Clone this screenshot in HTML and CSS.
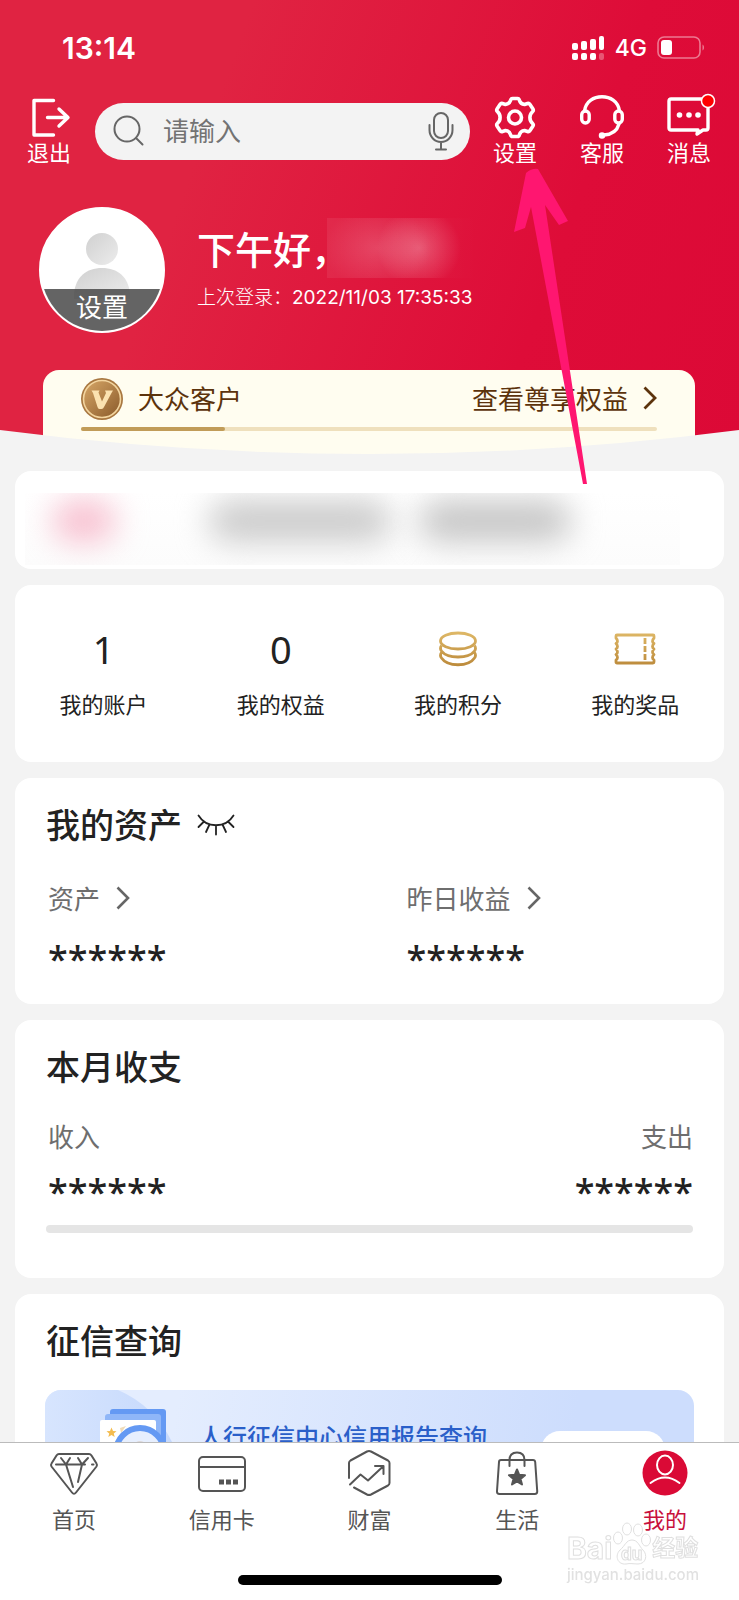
FILE: index.html
```html
<!DOCTYPE html>
<html lang="zh-CN">
<head>
<meta charset="utf-8">
<meta name="viewport" content="width=device-width, initial-scale=1">
<title>我的</title>
<link rel="stylesheet" href="styles.css">
</head>
<body>
<div class="app">
  <main class="scroll">
    <header class="hero">
      <div class="status">
        <span class="status-time">13:14</span>
        <div class="status-right">
          <svg class="signal" viewBox="0 0 33 24" width="33" height="24" fill="#fff">
            <rect x="0" y="7" width="6" height="7" rx="2"/><rect x="9" y="5" width="6" height="9" rx="2"/><rect x="18" y="3" width="6" height="11" rx="2"/><rect x="27" y="0" width="5" height="14" rx="2"/>
            <rect x="0" y="17" width="6" height="7" rx="2"/><rect x="9" y="17" width="6" height="7" rx="2"/><rect x="18" y="17" width="6" height="7" rx="2"/><rect x="27" y="17" width="5" height="7" rx="2" opacity=".3"/>
          </svg>
          <span class="status-net">4G</span>
          <svg viewBox="0 0 48 24" width="48" height="24">
            <rect x="1" y="1" width="42" height="21" rx="6" fill="none" stroke="#fff" stroke-opacity=".45" stroke-width="1.6"/>
            <rect x="4" y="4" width="11" height="15" rx="3" fill="#fff"/>
            <path d="M45.500 8.500c2 1 2 5 0 6z" fill="#fff" opacity=".45"/>
          </svg>
        </div>
      </div>

      <div class="toolbar">
        <button class="tool" type="button">
          <svg viewBox="0 0 44 44" width="44" height="44" fill="none" stroke="#fff" stroke-width="3.4" stroke-linecap="round" stroke-linejoin="round">
            <path d="M26.500 5.500H7v34.500h19.500M20.500 22.500h20M32 14l9 8.500-9 8.500"/>
          </svg>
          <span>退出</span>
        </button>
        <label class="search">
          <svg viewBox="0 0 32 32" width="32" height="32" fill="none" stroke="#666" stroke-width="2" stroke-linecap="round"><circle cx="14" cy="14" r="12.500"/><path d="M23 23l6.500 6.500"/></svg>
          <input class="search-input" type="text" placeholder="请输入" aria-label="搜索">
          <svg viewBox="0 0 26 40" width="26" height="40" fill="none" stroke="#666" stroke-width="2" stroke-linecap="round"><rect x="6" y="2" width="14" height="25" rx="7"/><path d="M1.500 14v5a11.500 12 0 0 0 23 0v-5M13 31v7M8 38.500h10"/></svg>
        </label>
        <button class="tool" type="button">
          <svg viewBox="0 0 44 44" width="44" height="44" fill="none" stroke="#fff" stroke-width="3.600" stroke-linejoin="round">
            <path d="M19.500 3.500h5q1.500 0 2 2 1 3.500 5 4l3-1q1.500-.5 2.500 1l3 4.500q.8 1.500-.5 2.700-2.600 2.300-2.600 5.800t2.600 5.800q1.300 1.200.5 2.700l-3 4.500q-1 1.500-2.500 1l-3-1q-4 .5-5 4-.5 2-2 2h-5q-1.500 0-2-2-1-3.500-5-4l-3 1q-1.500.5-2.500-1l-3-4.500q-.8-1.500.5-2.700 2.600-2.300 2.600-5.800t-2.600-5.800q-1.300-1.200-.5-2.700l3-4.500q1-1.500 2.500-1l3 1q4-.5 5-4 .5-2 2-2z"/>
            <circle cx="22" cy="22.500" r="6.500"/>
          </svg>
          <span>设置</span>
        </button>
        <button class="tool" type="button">
          <svg viewBox="0 0 44 44" width="44" height="44" fill="none" stroke="#fff" stroke-width="3.400" stroke-linecap="round">
            <path d="M4.500 16C6 6 14 1.800 22 1.800S38 6 39.500 16M39 29c-2 7-7 10.500-15 11"/>
            <rect x="1.700" y="16" width="7.500" height="12" rx="3.700"/><rect x="34.800" y="16" width="7.500" height="12" rx="3.700"/>
            <circle cx="22" cy="40.500" r="2.500" fill="#fff" stroke-width="1.500"/>
          </svg>
          <span>客服</span>
        </button>
        <button class="tool" type="button">
          <svg class="overflowing" viewBox="0 0 44 44" width="44" height="44" fill="none" stroke="#fff" stroke-width="3.400" stroke-linejoin="round">
            <path d="M4 4h35q2 0 2 2v27q0 2-2 2h-3l-6 4 1-4H4q-2 0-2-2V6q0-2 2-2z"/>
            <g fill="#fff" stroke="none"><circle cx="12.500" cy="20" r="2.800"/><circle cx="22" cy="20" r="2.800"/><circle cx="31" cy="20" r="2.800"/></g>
            <circle cx="41" cy="6" r="6.500" fill="#f00" stroke-width="1.500"/>
          </svg>
          <span>消息</span>
        </button>
      </div>

      <section class="profile">
        <button class="avatar" type="button">
          <svg class="avatar-figure" viewBox="0 0 56 67" width="56" height="67">
            <defs><linearGradient id="fig" x1="0" y1="0" x2="1" y2="1"><stop offset="0" stop-color="#d0d0d0"/><stop offset="1" stop-color="#ececec"/></linearGradient></defs>
            <circle cx="28" cy="16" r="16" fill="url(#fig)"/>
            <path d="M0 66V60C2 44 12 35 28 35S54 44 56 60v6z" fill="url(#fig)"/>
          </svg>
          <span class="avatar-label">设置</span>
        </button>
        <div class="greeting">
          <h1 class="hello">下午好，<span class="hidden-name"></span></h1>
          <p class="last-login">上次登录：<span class="stamp">2022/11/03 17:35:33</span></p>
        </div>
      </section>

      <section class="member">
        <div class="member-row">
          <svg viewBox="0 0 42 42" width="42" height="42">
            <defs><linearGradient id="coin" x1="0" y1="0" x2="1" y2="1"><stop offset="0" stop-color="#d7a767"/><stop offset="1" stop-color="#8a5a2a"/></linearGradient></defs>
            <circle cx="21" cy="21" r="21" fill="#a87740"/><circle cx="21" cy="21" r="18.500" fill="url(#coin)" stroke="#f3d59f" stroke-width="1.600"/>
            <path d="M10.500 12.500h8l-1 2 3.500 9 4-8.500-1-2.500h8l-1.500 2.500-7.500 14q-.7 2-2.500 2h-2q-1.500 0-2-2L12 15z" fill="#fbe2b0"/>
          </svg>
          <span class="member-name">大众客户</span>
          <a class="member-link" href="#">查看尊享权益
            <svg viewBox="0 0 14 24" width="14" height="24" fill="none" stroke="#5c330c" stroke-width="2.800"><path d="M1.500 1.500L12 12 1.500 22.500"/></svg>
          </a>
        </div>
        <div class="level"><div class="level-fill"></div></div>
      </section>
      <svg class="hero-curve" viewBox="0 0 739 25" preserveAspectRatio="none"><path d="M0 0Q369.500 48 739 0V25H0z" fill="#f3f3f3"/></svg>
    </header>

    <div class="cards">
      <section class="card notice">
        <div class="notice-mask"><i class="blob blob-pink"></i><i class="blob blob-left"></i><i class="blob blob-right"></i></div>
      </section>

      <nav class="card stats">
        <a class="stat" href="#"><span class="stat-value">1</span><span>我的账户</span></a>
        <a class="stat" href="#"><span class="stat-value">0</span><span>我的权益</span></a>
        <a class="stat" href="#">
          <span class="stat-value"><svg viewBox="0 0 40 36" width="40" height="36" fill="none" stroke="url(#gold)" stroke-width="2.800">
            <defs><linearGradient id="gold" gradientUnits="userSpaceOnUse" x1="0" y1="0" x2="0" y2="36"><stop offset="0" stop-color="#dfb968"/><stop offset="1" stop-color="#bb893a"/></linearGradient></defs>
            <ellipse cx="20" cy="10" rx="17.500" ry="8"/><path d="M3.500 14.500q-2 3 0 5.500c6 8 27 8 33 0q2-2.500 0-5.500M3.500 21.500q-2 3 0 5.500c6 9 27 9 33 0q2-2.500 0-5.500"/></svg></span>
          <span>我的积分</span></a>
        <a class="stat" href="#">
          <span class="stat-value"><svg viewBox="0 0 42 36" width="42" height="36" fill="none" stroke="url(#gold)" stroke-width="2.800" stroke-linejoin="round">
            <path d="M3 4h36q1 0 1 1v2q-3 3.500 0 5.500-3 3 0 5.500-3 3 0 5.500-3 3 0 5.500v2q0 1-1 1H3q-1 0-1-1v-2q3-2.500 0-5.500 3-2.500 0-5.500 3-2.500 0-5.500 3-2 0-5.500V5q0-1 1-1z"/><path d="M31 7v6M31 15v6M31 23v6"/></svg></span>
          <span>我的奖品</span></a>
      </nav>

      <section class="card panel assets">
        <div class="title-row">
          <h2 class="title">我的资产</h2>
          <button class="eye" type="button" aria-label="显示金额">
            <svg viewBox="0 0 38 22" width="38" height="22" fill="none" stroke="#222" stroke-width="1.800" stroke-linecap="round"><path d="M1.500 1.500c8 13 27 13 35 0M7 7.500L1.500 13M12.500 10.500L9 18M19 12v8.500M25.500 10.500L29 18M31 7.500l5.500 5.500"/></svg>
          </button>
        </div>
        <div class="asset-grid">
          <div>
            <a class="label" href="#">资产 <svg viewBox="0 0 14 24" width="14" height="24" fill="none" stroke="#666" stroke-width="2.600"><path d="M1.500 1.500L12 12 1.500 22.500"/></svg></a>
            <p class="amount">******</p>
          </div>
          <div>
            <a class="label" href="#">昨日收益 <svg viewBox="0 0 14 24" width="14" height="24" fill="none" stroke="#666" stroke-width="2.600"><path d="M1.500 1.500L12 12 1.500 22.500"/></svg></a>
            <p class="amount">******</p>
          </div>
        </div>
      </section>

      <section class="card panel monthly">
        <h2 class="title">本月收支</h2>
        <div class="flow">
          <div><span class="label">收入</span><p class="amount">******</p></div>
          <div class="flow-out"><span class="label">支出</span><p class="amount">******</p></div>
        </div>
        <div class="flow-bar"></div>
      </section>

      <section class="card panel credit">
        <h2 class="title">征信查询</h2>
        <div class="banner">
          <svg class="banner-art" viewBox="0 0 128 120" width="128" height="120">
            <defs><linearGradient id="disc" x1="0" y1="0" x2="1" y2="0"><stop offset="0" stop-color="#d7e5fe"/><stop offset="1" stop-color="#c6d9fc"/></linearGradient></defs>
            <path d="M0 0H73Q110 16 128 54v66H0z" fill="url(#disc)"/>
            <path d="M65 22q0-3 3-3h50q3 0 3 3v60H65z" fill="#6499f3"/>
            <path d="M60 27q0-3 3-3h50q3 0 3 3v60H60z" fill="#8fb6f8"/>
            <rect x="55" y="30" width="56" height="70" rx="2" fill="#fff"/>
            <path d="M66.500 37.500l1.500 3.500 3.500.2-2.700 2.300.9 3.500-3.200-1.900-3.200 1.900.9-3.500-2.700-2.300 3.500-.2z" fill="#f4bc50"/>
            <path d="M75 38l6-2-5 7zM90 37h5l-1 5zM98 38h4v5z" fill="#f0dcb8"/>
            <circle cx="95" cy="62" r="24" fill="#e7effe" stroke="#6499f3" stroke-width="6"/><circle cx="95" cy="58" r="7" fill="#ddd8d8"/>
          </svg>
          <div class="banner-body">
            <span class="banner-title">人行征信中心信用报告查询</span>
            <button class="banner-button" type="button">立即查询</button>
          </div>
        </div>
      </section>
    </div>
  </main>

  <footer class="bottom">
    <nav class="tabs">
      <a class="tab" href="#">
        <svg viewBox="0 0 50 48" width="50" height="48" fill="none" stroke="#555" stroke-width="2" stroke-linecap="round" stroke-linejoin="round"><path d="M10 5h30q1.500 0 2.500 1.500l5 8q1 1.500 0 3L27 43.500q-2 2.500-4 0L2.500 17.500q-1-1.500 0-3l5-8Q8.500 5 10 5zM7 15.500h29M43 15.500h1.500M12 9l5 6.500L24 38M21 9l-4 6.500M29 9l4 6.500L29 33M39 9l-6 6.500"/></svg>
        <span>首页</span></a>
      <a class="tab" href="#">
        <svg viewBox="0 0 50 48" width="50" height="48" fill="none" stroke="#555" stroke-width="2"><rect x="2" y="8" width="46" height="34" rx="4"/><path d="M2 18h46"/><path d="M22 33h5M29 33h5M36 33h5" stroke-width="5"/></svg>
        <span>信用卡</span></a>
      <a class="tab" href="#">
        <svg viewBox="0 0 50 48" width="50" height="48" fill="none" stroke="#555" stroke-width="2" stroke-linecap="round" stroke-linejoin="round"><path d="M5 29V14q0-1.500 1.500-2.500L23 2.500q2-1 4 0L44 11.500q1.500 1 1.500 2.500v20q0 1.500-1.500 2.500L27 45.500q-2 1-4 0L10 38.500M6 35.500l10.500-10 7.500 6 15-14M31 17h8.500v8"/></svg>
        <span>财富</span></a>
      <a class="tab" href="#">
        <svg viewBox="0 0 50 48" width="50" height="48" fill="none" stroke="#555" stroke-width="2" stroke-linecap="round" stroke-linejoin="round"><path d="M9 11h32q2 0 2.200 2l2 29q.2 3-2.500 3H7.500q-2.700 0-2.500-3l2-29Q7 11 9 11zM17.500 17V11q0-7.500 7.500-7.500t7.500 7.500v6"/><path d="M25 20.500l2.200 5.300 5.800.4-4.500 3.700 1.500 5.600-5-3.100-5 3.100 1.500-5.600-4.500-3.700 5.800-.4z" fill="#555"/></svg>
        <span>生活</span></a>
      <a class="tab tab-active" href="#">
        <svg viewBox="0 0 50 48" width="50" height="48" fill="none" stroke="#fff" stroke-width="2" stroke-linecap="round"><circle cx="25" cy="24" r="22.500" fill="#da0a36" stroke="none"/><ellipse cx="25" cy="16" rx="8" ry="9.500"/><path d="M10.500 34q14.500-11 29 0"/></svg>
        <span>我的</span></a>
    </nav>
    <div class="home-bar"></div>
  </footer>

  <svg class="pointer" viewBox="0 0 56 317" width="56" height="317"><path d="M12 4Q18-1 24 0L54 52 45 56 31 36 73 315H69L17 38 11 59 0 63z" fill="#ff1670"/></svg>
  <div class="watermark">
    <div class="mark-row">
      <span>Bai</span>
      <svg viewBox="0 0 40 44" width="40" height="44" fill="#fff" stroke="#dadada"><ellipse cx="6" cy="16" rx="4.500" ry="6"/><ellipse cx="15" cy="7" rx="4.500" ry="6"/><ellipse cx="26" cy="8" rx="4.500" ry="6"/><ellipse cx="34" cy="18" rx="4.500" ry="6"/><path d="M20 18c6 0 7 6 11 10 5 5 3 14-5 14-4 0-8-1-12 0-8 1-12-8-6-14 5-4 6-10 12-10z"/><text class="mark-du" x="9" y="38">du</text></svg>
      <span class="mark-cn">经验</span>
    </div>
    <div class="mark-url">jingyan.baidu.com</div>
  </div>
</div>
</body>
</html>
```

FILE: styles.css
```css
* { box-sizing: border-box; }

body {
  margin: 0;
  background: #f3f3f3;
  color: #222;
  font-family: "Noto Sans CJK SC", sans-serif;
  font-size: 22px;
}

h1, h2, p { margin: 0; }
a { color: inherit; text-decoration: none; }
svg { display: block; flex: none; }
button { padding: 0; border: 0; background: none; color: inherit; font: inherit; }

.app {
  position: relative;
  display: flex;
  flex-direction: column;
  height: 100vh;
  overflow: hidden;
}

.scroll {
  flex: 1;
  min-height: 0;
  overflow-y: auto;
  scrollbar-width: none;
}

/* Hero */
.hero {
  position: relative;
  background: linear-gradient(110deg, #e02342 0%, #e02342 28%, #de0c38 72%, #dc0936 100%);
}

.hero-curve {
  position: absolute;
  left: 0;
  bottom: 0;
  width: 100%;
  height: 25px;
}

.status {
  display: flex;
  align-items: center;
  justify-content: space-between;
  height: 95px;
  padding: 0 34px 0 62px;
  color: #fff;
  font-family: Inter, sans-serif;
}

.status-time { font-size: 30px; font-weight: 600; }
.status-right { display: flex; align-items: center; gap: 10px; }
.status-net { font-size: 23px; font-weight: 500; }

.toolbar {
  display: flex;
  align-items: center;
  padding: 0 28px 0 27px;
  color: #fff;
}

.tool {
  display: flex;
  flex-direction: column;
  align-items: center;
  width: 44px;
  padding-bottom: 4px;
  line-height: 24px;
  white-space: nowrap;
}

.tool + .tool { margin-left: 43px; }
.overflowing { overflow: visible; }

.search {
  display: flex;
  flex: 1;
  align-items: center;
  gap: 18px;
  min-width: 0;
  height: 57px;
  margin: 0 23px 0 24px;
  padding: 0 16px 0 18px;
  border-radius: 29px;
  background: #f3f3f3;
}

.search-input {
  flex: 1;
  min-width: 0;
  height: 40px;
  padding: 0 0 4px;
  border: 0;
  outline: 0;
  background: none;
  color: #222;
  font: 26px "Noto Sans CJK SC", sans-serif;
}

.search-input::placeholder { color: #737373; opacity: 1; }

.profile {
  display: flex;
  gap: 32px;
  padding: 40px 39px 37px;
  color: #fff;
}

.avatar {
  display: flex;
  flex: none;
  flex-direction: column;
  align-items: center;
  position: relative;
  width: 126px;
  height: 126px;
  padding-top: 24px;
  overflow: hidden;
  border: 2px solid #fff;
  border-radius: 50%;
  background: #fff;
}

.avatar-label {
  position: absolute;
  right: 0;
  bottom: 0;
  left: 0;
  height: 42px;
  background: rgba(70, 70, 70, .84);
  font-size: 26px;
  line-height: 34px;
}

.greeting { padding-top: 13px; }

.hello {
  display: flex;
  align-items: center;
  height: 56px;
  font-size: 38px;
  font-weight: 500;
  line-height: 56px;
  white-space: nowrap;
}

.hidden-name {
  width: 150px;
  height: 60px;
  margin-left: -22px;
  background: radial-gradient(ellipse 42px 40px at 92px 30px, rgba(255, 255, 255, .26), transparent),
    radial-gradient(ellipse 54px 42px at 50px 30px, rgba(255, 255, 255, .16), transparent),
    linear-gradient(90deg, rgba(255, 255, 255, .07), transparent);
}

.last-login { font-size: 19px; font-weight: 300; line-height: 40px; }
.stamp { font-family: Inter, sans-serif; font-weight: 400; }

.member {
  min-height: 85px;
  margin: 0 44px 0 43px;
  padding: 8px 38px 0;
  border-radius: 16px 16px 0 0;
  background: #fffdf0;
  color: #5c330c;
  font-size: 26px;
}

.member-row { display: flex; align-items: center; height: 42px; line-height: 38px; }
.member-name { margin-left: 15px; padding-bottom: 2px; }

.member-link {
  display: flex;
  align-items: center;
  gap: 15px;
  margin-left: auto;
  padding-bottom: 2px;
}

.level {
  height: 4px;
  margin-top: 7px;
  border-radius: 2px;
  background: #efe0bd;
}

.level-fill {
  width: 25%;
  height: 4px;
  border-radius: 2px;
  background: #c19c58;
}

/* Cards */
.cards {
  display: flex;
  flex-direction: column;
  gap: 16px;
  padding: 16px 15px;
}

.card { border-radius: 16px; background: #fff; }

.notice { padding: 22px 44px 4px 10px; }

.notice-mask {
  position: relative;
  height: 72px;
  overflow: hidden;
  background: linear-gradient(180deg, #fff, #fcfcfc);
}

.blob {
  position: absolute;
  top: 8px;
  height: 40px;
  border-radius: 20px;
  filter: blur(16px);
}

.blob-pink { left: 28px; width: 62px; background: #f7bccd; }
.blob-left { left: 184px; width: 182px; background: #c9c9c9; }
.blob-right { left: 394px; width: 152px; background: #c4c4c4; }

.stats {
  display: grid;
  grid-template-columns: repeat(4, 1fr);
  padding: 40px 0 39px;
}

.stat {
  display: flex;
  flex-direction: column;
  align-items: center;
  gap: 10px;
  line-height: 40px;
}

.stat-value {
  display: flex;
  align-items: center;
  height: 48px;
  font-family: "Noto Sans", sans-serif;
  font-size: 38px;
}

.panel { padding: 23px 31px; }

.title-row { display: flex; align-items: center; gap: 15px; }

.title {
  font-size: 34px;
  font-weight: 500;
  line-height: 46px;
  padding-bottom: 2px;
}

.asset-grid {
  display: grid;
  grid-template-columns: 1fr 1fr;
  gap: 70px;
  margin-top: 30px;
}

.label {
  display: flex;
  align-items: center;
  gap: 16px;
  padding-left: 2px;
  color: #6e6e6e;
  font-size: 26px;
  line-height: 38px;
}

.amount {
  padding-left: 2px;
  font-family: "Noto Sans", sans-serif;
  font-size: 36px;
  font-weight: 500;
  line-height: 48px;
}

.assets { padding-bottom: 21px; }
.assets .amount { margin-top: 18px; }

.monthly { padding-bottom: 45px; }

.flow {
  display: flex;
  justify-content: space-between;
  margin-top: 26px;
}

.flow .amount { margin-top: 13px; }
.flow-out .label { justify-content: flex-end; }

.flow-bar {
  height: 8px;
  margin-top: 9px;
  border-radius: 4px;
  background: #e5e5e5;
}

.banner {
  position: relative;
  height: 120px;
  margin: 25px -1px 0;
  overflow: hidden;
  border-radius: 16px;
  background: linear-gradient(100deg, #e4edfe 20%, #cdddfd 80%);
}

.banner-art { position: absolute; top: 0; left: 0; }

.banner-body {
  position: relative;
  display: flex;
  justify-content: space-between;
  padding: 26px 29px 0 154px;
}

.banner-title {
  color: #2a5fc9;
  font-size: 24px;
  font-weight: 500;
  line-height: 40px;
}

.banner-button {
  width: 124px;
  height: 38px;
  margin-top: 15px;
  border-radius: 19px;
  background: #fff;
  color: #2a5fc9;
  font-size: 18px;
}

/* Bottom tabs */
.bottom {
  border-top: 1px solid #bbb;
  background: #fff;
}

.tabs {
  display: grid;
  grid-template-columns: repeat(5, 1fr);
  padding-top: 6px;
  color: #555;
}

.tab {
  display: flex;
  flex-direction: column;
  align-items: center;
  gap: 5px;
  line-height: 32px;
}

.tab-active { color: #c8103c; }

.home-bar {
  width: 264px;
  height: 10px;
  margin: 41px auto 15px;
  border-radius: 5px;
  background: #000;
}

/* Overlays */
.pointer {
  position: absolute;
  top: 169px;
  left: 514px;
  overflow: visible;
}

.watermark {
  position: absolute;
  right: 40px;
  bottom: 16px;
  color: #fff;
  font-family: Inter, "Noto Sans CJK SC", sans-serif;
  font-weight: 700;
  opacity: .85;
  -webkit-text-stroke: 1px #dadada;
}

.mark-row {
  display: flex;
  align-items: flex-end;
  font-size: 30px;
  line-height: 36px;
}

.mark-cn { font-size: 23px; }
.mark-du { font-size: 17px; }
.mark-url { font-size: 15px; font-weight: 500; line-height: 18px; -webkit-text-stroke: 0; color: #dcdcdc; }
```
